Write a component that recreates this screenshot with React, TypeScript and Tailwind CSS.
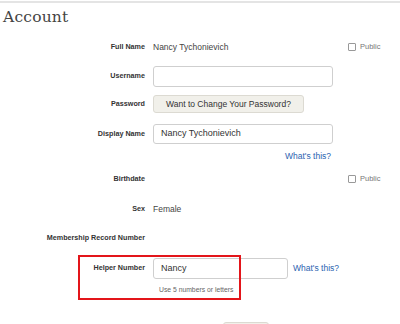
import type { ReactNode } from "react";

function Row({ label, className, children }: { label?: string; className: string; children?: ReactNode }) {
  return (
    <div className={`flex items-center ${className}`}>
      <div className="w-[145px] shrink-0 text-right text-[7.2px] font-bold text-[#333]">{label}</div>
      <div className="ml-[8px] flex items-center">{children}</div>
    </div>
  );
}

function Public() {
  return (
    <div className="flex items-center gap-[4px] text-[7.5px] text-[#777]">
      <span className="block size-[8px] rounded-[1px] border border-[#999] bg-white" />
      Public
    </div>
  );
}

function TextInput({ value, className }: { value?: string; className: string }) {
  return (
    <div className={`flex h-[21px] items-center rounded-[3px] border border-[#cfcfcf] bg-white px-[7px] text-[9px] text-[#333] ${className}`}>
      {value}
    </div>
  );
}

export default function App() {
  return (
    <div className="relative h-[324px] w-[400px] overflow-hidden bg-white font-['Liberation_Sans',sans-serif]">
      <div className="mt-[1px] h-[2px] bg-[#e4e4e4]" />
      <div className="h-[34px] pl-[3px] pt-[4px] font-['DejaVu_Serif',serif] text-[15.5px] leading-[20px] tracking-[0.2px] text-[#444]">
        Account
      </div>

      <Row label="Full Name" className="h-[20px]">
        <div className="w-[195px] text-[8.5px] text-[#444]">Nancy Tychonievich</div>
        <Public />
      </Row>

      <Row label="Username" className="mt-[9px] h-[21px]">
        <TextInput className="w-[180px]" />
      </Row>

      <Row label="Password" className="mt-[8px] h-[18px]">
        <div className="flex h-[18px] items-center rounded-[3px] border border-[#dcdad2] bg-[#f1f0ea] px-[12px] text-[8.5px] text-[#333]">
          Want to Change Your Password?
        </div>
      </Row>

      <Row label="Display Name" className="mt-[11px] h-[20px]">
        <TextInput value="Nancy Tychonievich" className="w-[180px] !h-[20px]" />
      </Row>

      <Row className="mt-[7px] h-[10px]">
        <div className="w-[178px] text-right text-[8.5px] text-[#2b63b0]">What's this?</div>
      </Row>

      <Row label="Birthdate" className="mt-[11px] h-[14px]">
        <div className="w-[195px]" />
        <Public />
      </Row>

      <Row label="Sex" className="mt-[16px] h-[14px]">
        <div className="text-[8.5px] text-[#444]">Female</div>
      </Row>

      <Row label="Membership Record Number" className="mt-[15px] h-[14px]" />

      <Row label="Helper Number" className="mt-[13px] h-[21px]">
        <TextInput value="Nancy" className="w-[135px]" />
        <div className="ml-[5px] text-[8.5px] text-[#2b63b0]">What's this?</div>
      </Row>

      <Row className="mt-[6px] h-[10px]">
        <div className="pl-[6px] text-[6.8px] text-[#666]">Use 5 numbers or letters</div>
      </Row>

      <div className="ml-[223px] mt-[27px] h-[20px] w-[46px] rounded-[3px] border border-[#dcdad2] bg-[#f1f0ea]" />

      <div className="absolute left-[78px] top-[255px] h-[45px] w-[163px] border-2 border-[#e3151a]" />
    </div>
  );
}
